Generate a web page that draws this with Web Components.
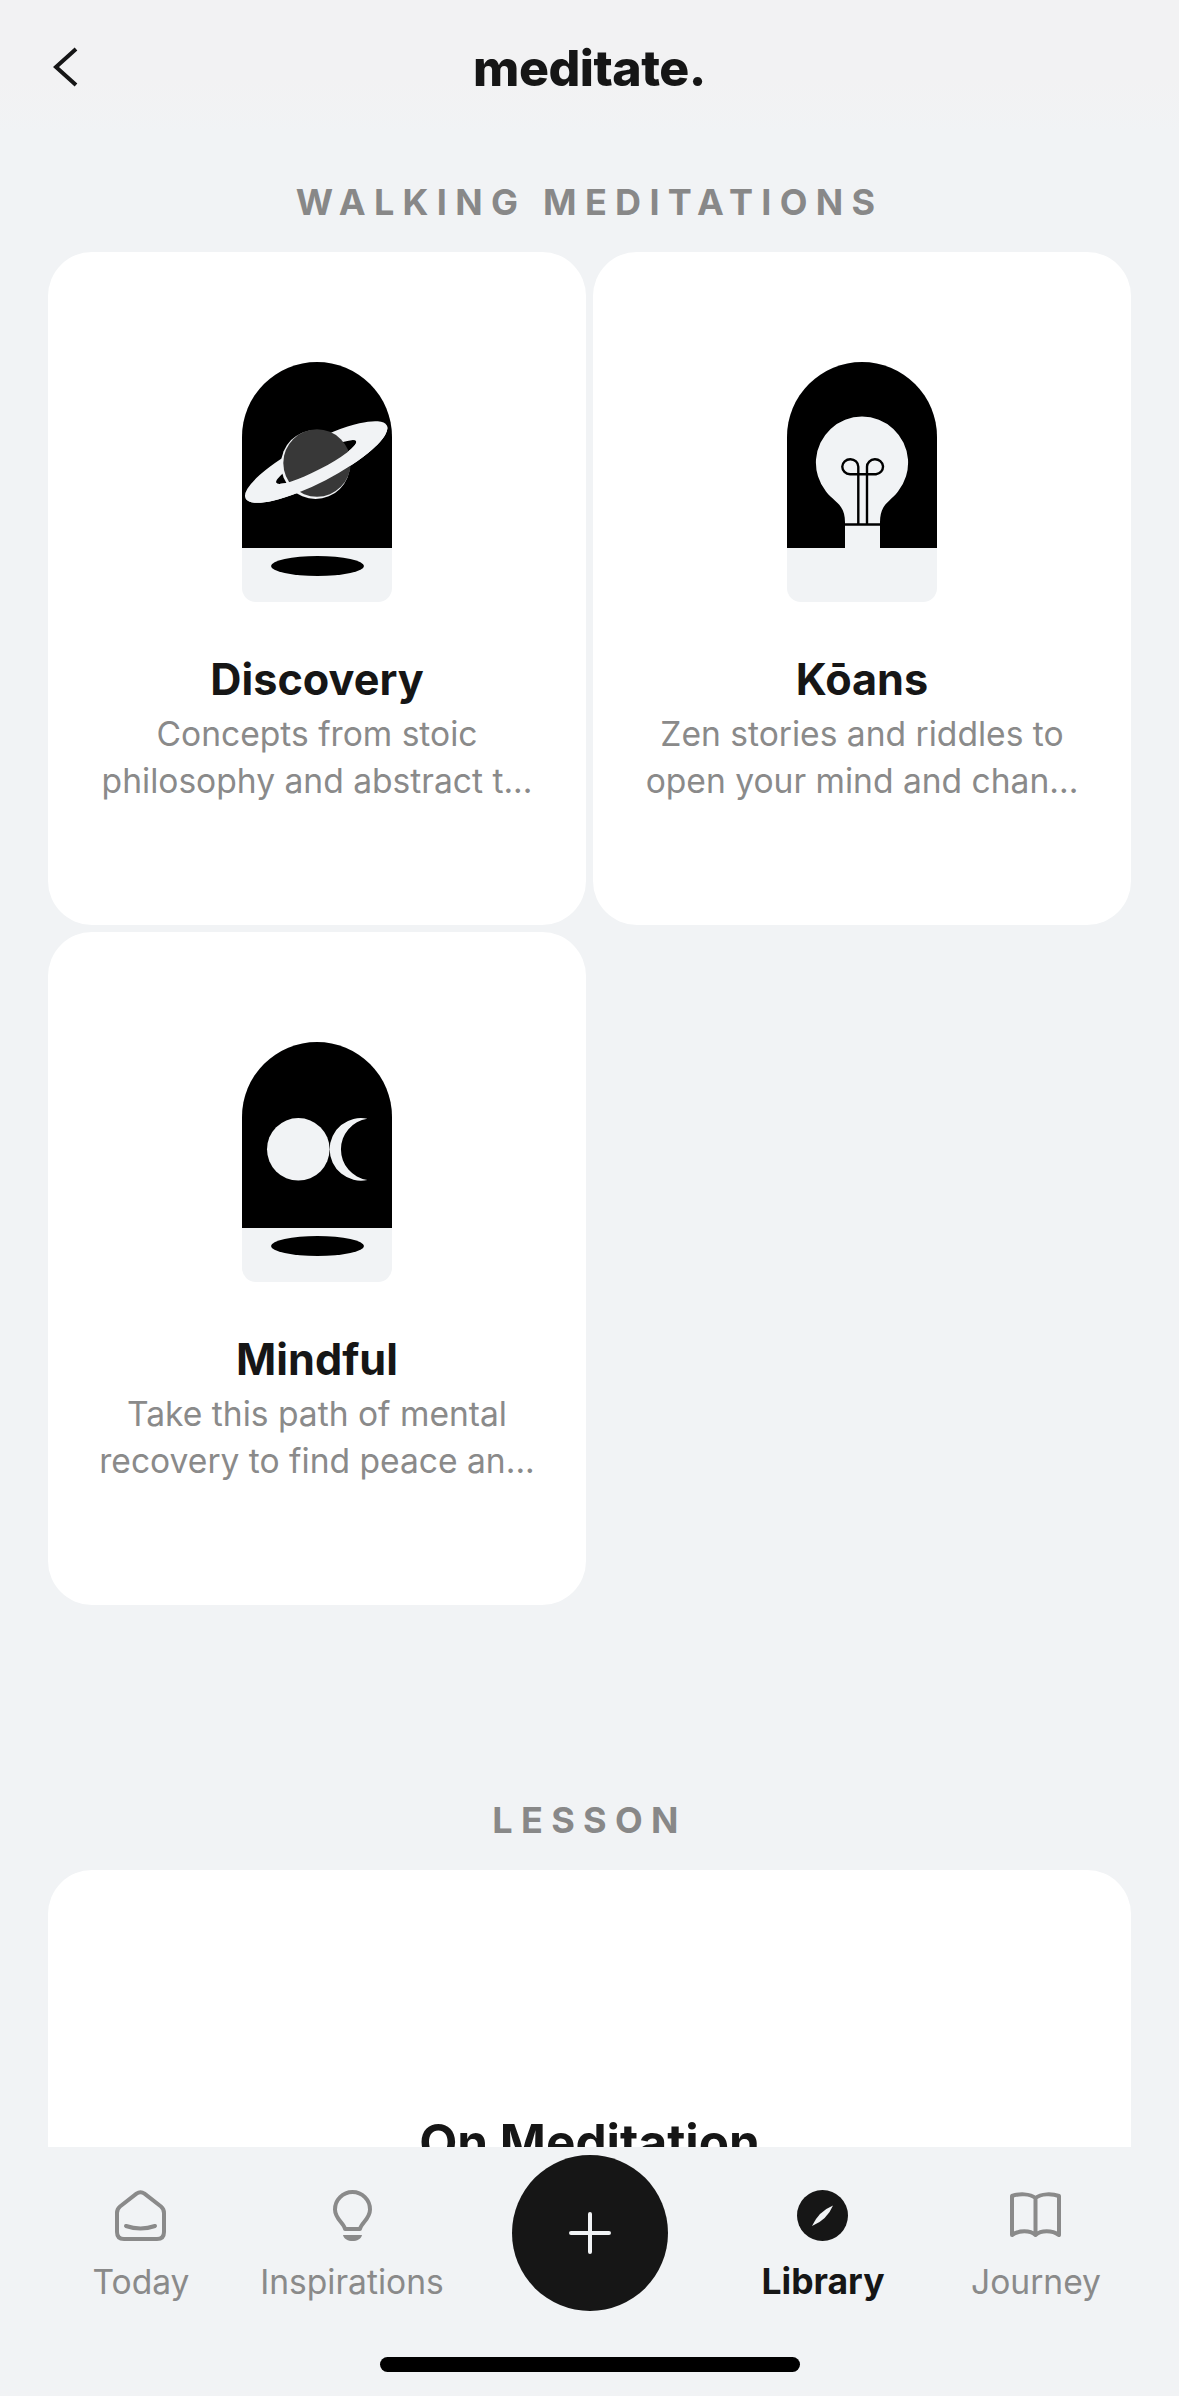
<!DOCTYPE html>
<html>
<head>
<meta charset="utf-8">
<title>meditate.</title>
<style>
    html, body { margin: 0; padding: 0; background: #f1f3f5; }
    body { font-family: "Inter", "Liberation Sans", sans-serif; color: #161616; }
</style>
</head>
<body>
<app-shell>
    <top-bar>meditate.</top-bar>
    <section-label>WALKING MEDITATIONS</section-label>
    <card-grid>
        <med-card name="Discovery" desc="Concepts from stoic philosophy and abstract t...">
            <arch-art ground>
                <svg viewBox="0 0 150 186" width="150" height="186">
                    <ellipse cx="74.2" cy="100" rx="79.5" ry="20.5" fill="#f1f3f5" transform="rotate(-27.4 74.2 100)"/>
                    <ellipse cx="74.2" cy="100" rx="45" ry="8" fill="#000" transform="rotate(-27.4 74.2 100)"/>
                    <circle cx="73.5" cy="102.5" r="34.5" fill="#f1f3f5"/>
                    <circle cx="75" cy="101" r="33.7" fill="#383838"/>
                    <path d="M-79.5 0A79.5 20.5 0 0 0 79.5 0L45 0A45 8 0 0 1 -45 0Z" fill="#f1f3f5" transform="translate(74.2 100) rotate(-27.4)"/>
                </svg>
            </arch-art>
        </med-card>
        <med-card name="Kōans" desc="Zen stories and riddles to open your mind and chan...">
            <arch-art>
                <svg viewBox="0 0 150 186" width="150" height="186">
                    <path d="M58 186V160C58 142 47 140 39 129.5A46.1 46.1 0 1 1 111 129.5C103 140 93 142 93 160V186Z" fill="#f1f3f5"/>
                    <path d="M58 162.5H93M71.3 162V104.7A8 7.5 0 1 0 63 112.2H89A8 7.5 0 1 0 80 104.7V162" fill="none" stroke="#000" stroke-width="2.4"/>
                </svg>
            </arch-art>
        </med-card>
        <med-card name="Mindful" desc="Take this path of mental recovery to find peace an...">
            <arch-art ground>
                <svg viewBox="0 0 150 186" width="150" height="186">
                    <circle cx="56.3" cy="107.3" r="31.3" fill="#f1f3f5"/>
                    <path d="M125.3 76.7A31.3 31.3 0 1 0 125.3 138A31 31 0 0 1 125.3 76.7Z" fill="#f1f3f5"/>
                </svg>
            </arch-art>
        </med-card>
    </card-grid>
    <section-label style="margin-top: 145px">LESSON</section-label>
    <lesson-card name="On Meditation"></lesson-card>

    <bottom-nav slot="nav">
        <nav-item label="Today">
            <svg viewBox="0 0 51 51" width="51" height="51" fill="none" stroke="#8a8a8a" stroke-width="4" stroke-linecap="round" stroke-linejoin="round">
                <path d="M21.5 3.6Q25.5 .8 29.5 3.6L46 16.5Q49 19 49 23V42Q49 49 42 49H9Q2 49 2 42V23Q2 19 5 16.5Z"/>
                <path d="M11 36Q25.5 41 40 36"/>
            </svg>
        </nav-item>
        <nav-item label="Inspirations">
            <svg viewBox="0 0 39 51" width="39" height="51" fill="none" stroke="#8a8a8a" stroke-width="4" stroke-linejoin="round">
                <path d="M12 39C11 33 2 29 2 19.5A17.5 17.5 0 0 1 37 19.5C37 29 28 33 27 39Z"/>
                <path d="M10 45H29C28 49 24 51 19.5 51C15 51 11 49 10 45Z" fill="#8a8a8a" stroke="none"/>
            </svg>
        </nav-item>
        <add-button></add-button>
        <nav-item label="Library" active>
            <svg viewBox="0 0 51 51" width="51" height="51">
                <circle cx="25.5" cy="25.5" r="25.5" fill="#161616"/>
                <path d="M15 36Q21.5 21.5 36 15.5Q30 30 15 36Z" fill="#f1f3f5"/>
            </svg>
        </nav-item>
        <nav-item label="Journey">
            <svg viewBox="0 0 51 51" width="51" height="51" fill="none" stroke="#8a8a8a" stroke-width="4" stroke-linejoin="round">
                <path d="M25.5 8C20 3.5 9 3.5 2 6V45C9 40 20 40 25.5 45C31 40 42 40 49 45V6C42 3.5 31 3.5 25.5 8ZM25.5 8V45"/>
            </svg>
        </nav-item>
    </bottom-nav>
</app-shell>

<script>
class AppShell extends HTMLElement {
    constructor() {
        super();
        this.attachShadow({mode: 'open'});
        this.shadowRoot.innerHTML = `
            <style>
                :host {
                    display: flex;
                    flex-direction: column;
                    height: 2396px;
                    overflow: hidden;
                }
                main {
                    flex: 1;
                    min-height: 0;
                    overflow: hidden;
                    display: flex;
                    flex-direction: column;
                }
            </style>
            <main><slot></slot></main>
            <slot name="nav"></slot>
        `;
    }
}

class TopBar extends HTMLElement {
    constructor() {
        super();
        this.attachShadow({mode: 'open'});
        this.shadowRoot.innerHTML = `
            <style>
                :host {
                    display: block;
                    flex: none;
                    background: linear-gradient(#f2f2f3 60%, #f1f3f5);
                }
                #bar {
                    height: 132px;
                    display: grid;
                    grid-template-columns: 100px 1fr 100px;
                    align-items: start;
                }
                svg {
                    display: block;
                    margin: 46px 0 0 52px;
                }
                h1 {
                    margin: 36px 0 0;
                    text-align: center;
                    font-size: 50px;
                    line-height: 64px;
                    font-weight: 800;
                    letter-spacing: -0.5px;
                    color: #161616;
                }
            </style>
            <div id="bar">
                <svg viewBox="0 0 26 42" width="26" height="42" fill="none" stroke="#161616" stroke-width="4">
                    <path d="M24 3L4 21L24 39"/>
                </svg>
                <h1><slot></slot></h1>
            </div>
        `;
    }
}

class SectionLabel extends HTMLElement {
    constructor() {
        super();
        this.attachShadow({mode: 'open'});
        this.shadowRoot.innerHTML = `
            <style>
                :host {
                    display: block;
                    flex: none;
                    padding: 50px 0 30px;
                    text-align: center;
                    font-size: 36px;
                    line-height: 40px;
                    font-weight: 700;
                    letter-spacing: 8.3px;
                    color: #888888;
                }
            </style>
            <slot></slot>
        `;
    }
}

class CardGrid extends HTMLElement {
    constructor() {
        super();
        this.attachShadow({mode: 'open'});
        this.shadowRoot.innerHTML = `
            <style>
                :host {
                    display: grid;
                    flex: none;
                    grid-template-columns: 1fr 1fr;
                    grid-auto-rows: 673px;
                    gap: 7px;
                    padding: 0 48px;
                }
            </style>
            <slot></slot>
        `;
    }
}

class MedCard extends HTMLElement {
    constructor() {
        super();
        this.attachShadow({mode: 'open'});
        this.shadowRoot.innerHTML = `
            <style>
                :host {
                    display: flex;
                    flex-direction: column;
                    align-items: center;
                    background: #fff;
                    border-radius: 44px;
                    padding-top: 110px;
                    text-align: center;
                }
                h2 {
                    margin: 49px 0 0;
                    font-size: 43.2px;
                    line-height: 56px;
                    font-weight: 700;
                    color: #161616;
                }
                p {
                    margin: 3px 0 0;
                    width: 460px;
                    font-size: 33.6px;
                    line-height: 47px;
                    font-weight: 400;
                    color: #8a8a8a;
                }
            </style>
            <slot></slot>
            <h2></h2>
            <p></p>
        `;
    }

    connectedCallback() {
        this.shadowRoot.querySelector('h2').textContent = this.getAttribute('name');
        this.shadowRoot.querySelector('p').textContent = this.getAttribute('desc');
    }
}

class ArchArt extends HTMLElement {
    constructor() {
        super();
        this.attachShadow({mode: 'open'});
        this.shadowRoot.innerHTML = `
            <style>
                :host {
                    display: block;
                    width: 150px;
                    height: 240px;
                    background: #f1f3f5;
                    border-radius: 75px 75px 14px 14px;
                    overflow: hidden;
                }
                #top {
                    height: 186px;
                    background: #000;
                }
                #top ::slotted(svg) {
                    display: block;
                }
                #ground {
                    display: none;
                    width: 93px;
                    height: 20px;
                    margin: 8px auto 0;
                    border-radius: 50%;
                    background: #000;
                }
                :host([ground]) #ground {
                    display: block;
                }
            </style>
            <div id="top"><slot></slot></div>
            <div id="ground"></div>
        `;
    }
}

class LessonCard extends HTMLElement {
    constructor() {
        super();
        this.attachShadow({mode: 'open'});
        this.shadowRoot.innerHTML = `
            <style>
                :host {
                    display: block;
                    flex: none;
                    height: 673px;
                    margin: 0 48px;
                    background: #fff;
                    border-radius: 44px;
                    text-align: center;
                }
                h2 {
                    margin: 0;
                    padding-top: 244px;
                    font-size: 49.5px;
                    line-height: 56px;
                    font-weight: 700;
                    color: #161616;
                }
            </style>
            <h2></h2>
        `;
    }

    connectedCallback() {
        this.shadowRoot.querySelector('h2').textContent = this.getAttribute('name');
    }
}

class BottomNav extends HTMLElement {
    constructor() {
        super();
        this.attachShadow({mode: 'open'});
        this.shadowRoot.innerHTML = `
            <style>
                :host {
                    display: block;
                    flex: none;
                    background: #f1f3f5;
                    padding: 8px 0 24px;
                }
                #items {
                    display: grid;
                    grid-template-columns: 222px 200px 276px 190px 236px;
                    height: 156px;
                    padding-left: 30px;
                    justify-items: center;
                }
                #home {
                    width: 420px;
                    height: 15px;
                    margin: 46px auto 0;
                    border-radius: 8px;
                    background: #000;
                }
            </style>
            <div id="items"><slot></slot></div>
            <div id="home"></div>
        `;
    }
}

class NavItem extends HTMLElement {
    constructor() {
        super();
        this.attachShadow({mode: 'open'});
        this.shadowRoot.innerHTML = `
            <style>
                :host {
                    display: flex;
                    flex-direction: column;
                    align-items: center;
                    padding-top: 35px;
                    color: #8a8a8a;
                }
                :host([active]) {
                    color: #161616;
                    font-weight: 700;
                }
                :host([active]) span {
                    font-size: 35.5px;
                }
                #icon {
                    height: 51px;
                    display: flex;
                }
                span {
                    margin-top: 17px;
                    font-size: 33.6px;
                    line-height: 48px;
                    white-space: nowrap;
                }
            </style>
            <div id="icon"><slot></slot></div>
            <span></span>
        `;
    }

    connectedCallback() {
        this.shadowRoot.querySelector('span').textContent = this.getAttribute('label');
    }
}

class AddButton extends HTMLElement {
    constructor() {
        super();
        this.attachShadow({mode: 'open'});
        this.shadowRoot.innerHTML = `
            <style>
                :host {
                    display: flex;
                    align-items: center;
                    justify-content: center;
                    width: 156px;
                    height: 156px;
                    border-radius: 50%;
                    background: #161616;
                }
            </style>
            <svg viewBox="0 0 42 42" width="42" height="42" fill="none" stroke="#f1f3f5" stroke-width="4" stroke-linecap="round">
                <path d="M21 2V40M2 21H40"/>
            </svg>
        `;
    }
}

customElements.define('app-shell', AppShell);
customElements.define('top-bar', TopBar);
customElements.define('section-label', SectionLabel);
customElements.define('card-grid', CardGrid);
customElements.define('med-card', MedCard);
customElements.define('arch-art', ArchArt);
customElements.define('lesson-card', LessonCard);
customElements.define('bottom-nav', BottomNav);
customElements.define('nav-item', NavItem);
customElements.define('add-button', AddButton);
</script>
</body>
</html>
